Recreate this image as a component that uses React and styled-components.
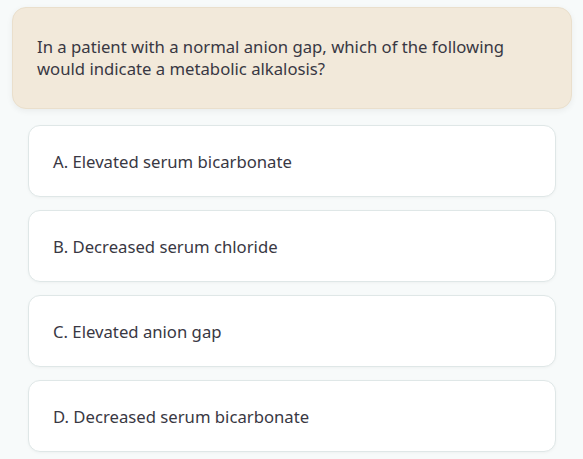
import React from "react";
import styled, { createGlobalStyle } from "styled-components";

const GlobalStyle = createGlobalStyle`
	body {
		margin: 0;
		background: #f7fafa;
		font-family: "Noto Sans", "Lato", sans-serif;
	}
`;

const Page = styled.div`
	padding: 7px 11px 8px 12px;
	display: flex;
	flex-direction: column;
	align-items: stretch;
`;

const QuestionCard = styled.div`
	background: #f2e9da;
	border: 1px solid #eadfcc;
	border-radius: 14px;
	padding: 28px 24px 28px 24px;
	box-shadow: 0 2px 6px rgba(0, 0, 0, 0.06);
	color: #393843;
	font-size: 16.7px;
	line-height: 22px;
`;

const OptionList = styled.ul`
	list-style: none;
	margin: 16px 16px 0 16px;
	padding: 0;
	display: flex;
	flex-direction: column;
	gap: 13px;
`;

const Option = styled.li`
	background: #ffffff;
	border: 1px solid #dfe7e7;
	border-radius: 12px;
	height: 70px;
	padding: 0 24px;
	display: flex;
	align-items: center;
	color: #393843;
	font-size: 16.7px;
	box-shadow: 0 1px 3px rgba(0, 0, 0, 0.04);
	cursor: pointer;
`;

const options = [
	"A. Elevated serum bicarbonate",
	"B. Decreased serum chloride",
	"C. Elevated anion gap",
	"D. Decreased serum bicarbonate",
];

const App = () => {
	return (
		<>
			<GlobalStyle />
			<Page>
				<QuestionCard>
					In a patient with a normal anion gap, which of the following
					<br />
					would indicate a metabolic alkalosis?
				</QuestionCard>
				<OptionList>
					{options.map((text) => (
						<Option key={text}>{text}</Option>
					))}
				</OptionList>
			</Page>
		</>
	);
};

export default App;
